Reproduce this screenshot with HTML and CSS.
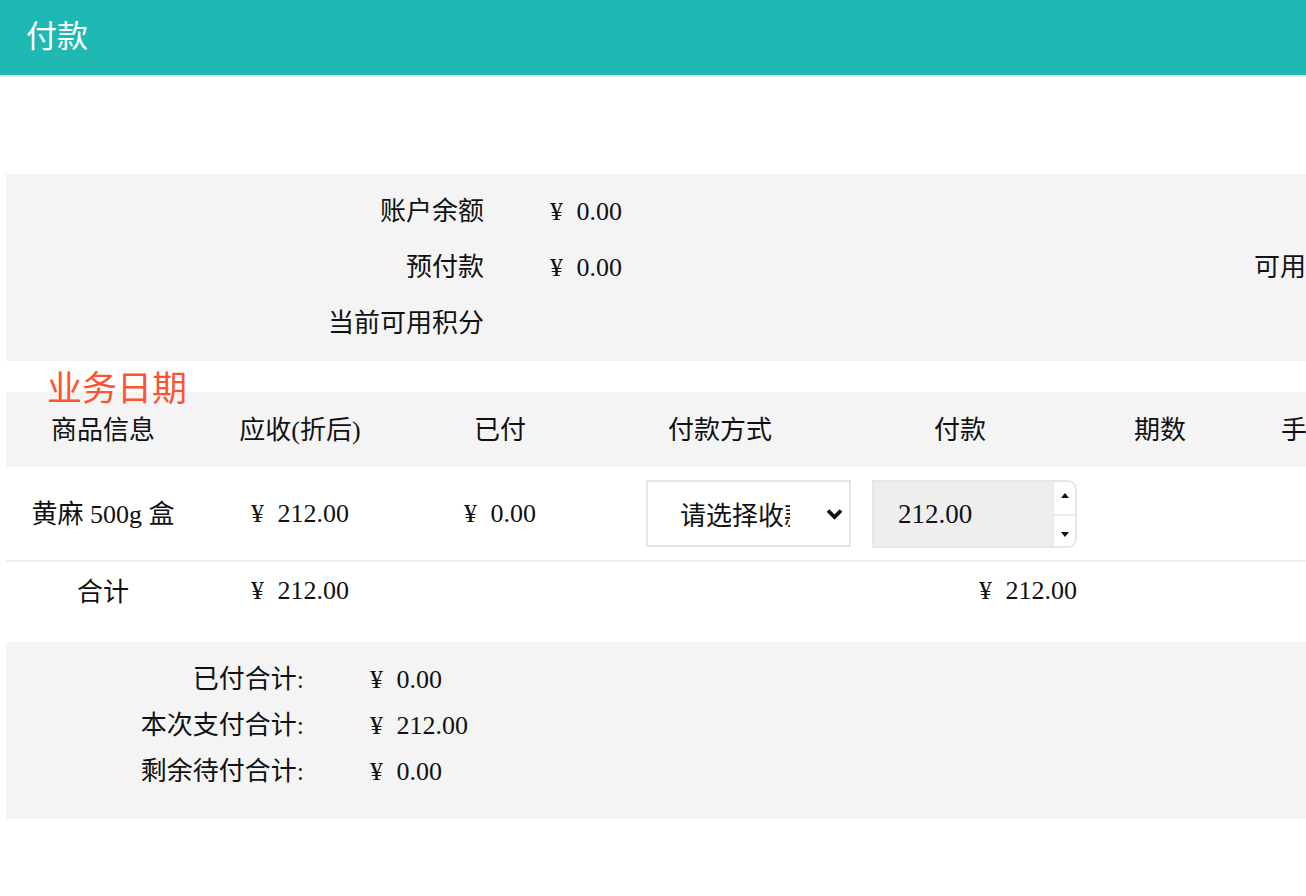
FILE: index.html
```html
<!DOCTYPE html>
<html lang="zh-CN">
<head>
	<meta charset="UTF-8">
	<title>付款</title>
	<link rel="stylesheet" href="styles.css">
</head>
<body>

	<div class="topbar">
		<h1>付款</h1>
	</div>

	<div class="page">

		<div class="account">
			<div class="account-row">
				<span class="lbl">账户余额</span><span class="val"><span class="cur">¥</span> 0.00</span>
				<span class="lbl">冻结额</span><span class="val"><span class="cur">¥</span> 0.00</span>
			</div>
			<div class="account-row">
				<span class="lbl">预付款</span><span class="val"><span class="cur">¥</span> 0.00</span>
				<span class="lbl">可用预付款</span><span class="val"><span class="cur">¥</span> 0.00</span>
			</div>
			<div class="account-row">
				<span class="lbl">当前可用积分</span><span class="val"></span>
				<span class="lbl"></span><span class="val"></span>
			</div>
		</div>

		<div class="biz-date">业务日期</div>

		<table class="pay-table">
			<colgroup>
				<col class="c1"><col class="c2"><col class="c3"><col class="c4"><col class="c5"><col class="c6"><col class="c7">
			</colgroup>
			<thead>
				<tr>
					<th>商品信息</th>
					<th>应收(折后)</th>
					<th>已付</th>
					<th>付款方式</th>
					<th>付款</th>
					<th>期数</th>
					<th>手续费</th>
				</tr>
			</thead>
			<tbody>
				<tr class="item">
					<td>黄麻 500g 盒</td>
					<td><span class="cur">¥</span> 212.00</td>
					<td><span class="cur">¥</span> 0.00</td>
					<td class="left">
						<div class="select">
							<span class="select-text">请选择收款方式</span>
							<svg class="chevron" width="17" height="12" viewBox="0 0 17 12"><path d="M2 2.5 L8.5 9 L15 2.5" fill="none" stroke="#111" stroke-width="3.8"/></svg>
						</div>
					</td>
					<td class="left">
						<div class="num-input">
							<span class="num-value">212.00</span>
							<span class="spin">
								<span class="spin-up"><i class="tri-up"></i></span>
								<span class="spin-down"><i class="tri-down"></i></span>
							</span>
						</div>
					</td>
					<td></td>
					<td></td>
				</tr>
				<tr class="total">
					<td>合计</td>
					<td><span class="cur">¥</span> 212.00</td>
					<td></td>
					<td></td>
					<td class="right"><span class="cur">¥</span> 212.00</td>
					<td></td>
					<td></td>
				</tr>
			</tbody>
		</table>

		<div class="summary">
			<div class="summary-row"><span class="lbl">已付合计:</span><span class="val"><span class="cur">¥</span> 0.00</span></div>
			<div class="summary-row"><span class="lbl">本次支付合计:</span><span class="val"><span class="cur">¥</span> 212.00</span></div>
			<div class="summary-row"><span class="lbl">剩余待付合计:</span><span class="val"><span class="cur">¥</span> 0.00</span></div>
		</div>

	</div>

</body>
</html>
```

FILE: styles.css
```css
html, body {
	margin: 0;
	padding: 0;
	overflow: hidden;
}

body {
	font-family: "Liberation Serif", "Noto Sans CJK SC", serif;
	font-size: 26px;
	color: #111;
	background: #fff;
}

.topbar {
	height: 75px;
	background: #20b8b3;
	border-bottom: 2px solid #e3e3e3;
	padding-left: 26px;
}

.topbar h1 {
	margin: 0;
	font-family: "Noto Sans CJK SC", sans-serif;
	font-size: 31px;
	font-weight: normal;
	line-height: 68px;
	color: #fff;
}

.page {
	padding-left: 6px;
	width: 1500px;
}

.cur {
	margin-right: 7px;
}

/* account info */
.account {
	margin-top: 97px;
	background: #f4f4f4;
	padding: 10px 0 9px;
}

.account-row {
	display: grid;
	grid-template-columns: 478px 422px 478px 422px;
	line-height: 56px;
	height: 56px;
}

.account-row .lbl {
	text-align: right;
}

.account-row .val {
	padding-left: 66px;
}

.biz-date {
	position: relative;
	z-index: 1;
	height: 31px;
	line-height: 50px;
	padding-left: 41px;
	font-family: "Noto Sans CJK SC", sans-serif;
	font-size: 35px;
	color: #ff5230;
}

/* table */
.pay-table {
	border-collapse: collapse;
	table-layout: fixed;
	width: 1394px;
}

.c1 { width: 194px; }
.c2 { width: 200px; }
.c3 { width: 200px; }
.c4 { width: 240px; }
.c5 { width: 240px; }
.c6 { width: 160px; }
.c7 { width: 160px; }

.pay-table th {
	height: 71px;
	padding: 0 0 4px;
	background: #f4f4f4;
	font-weight: normal;
	text-align: center;
	white-space: nowrap;
}

.pay-table td {
	padding: 0;
	text-align: center;
	white-space: nowrap;
}

.pay-table .item td {
	height: 93px;
	border-bottom: 2px solid #efefef;
}

.pay-table .item td:first-child {
	height: 89px;
	padding-bottom: 4px;
}

.pay-table .total td {
	height: 57px;
	padding-bottom: 2px;
}

.pay-table .total td:first-child {
	height: 55px;
	padding-bottom: 4px;
}

.pay-table td.left {
	text-align: left;
}

.pay-table td.right {
	text-align: right;
	padding-right: 3px;
}

.select {
	display: flex;
	align-items: center;
	box-sizing: border-box;
	width: 205px;
	height: 67px;
	margin-left: 46px;
	padding-left: 32px;
	background: #fff;
	border: 2px solid #e6e6e6;
	font-family: "Noto Sans CJK SC", sans-serif;
}

.select-text {
	display: block;
	width: 110px;
	overflow: hidden;
	white-space: nowrap;
}

.chevron {
	margin-left: 36px;
}

.num-input {
	display: flex;
	box-sizing: border-box;
	width: 205px;
	height: 68px;
	margin-left: 32px;
	background: #eeeeee;
	border: 2px solid #e6e6e6;
	border-radius: 0 9px 9px 0;
	overflow: hidden;
}

.num-value {
	flex: 1;
	padding-left: 24px;
	line-height: 64px;
	font-size: 27px;
}

.spin {
	display: flex;
	flex-direction: column;
	width: 21px;
	background: #fff;
	border-left: 1px solid #e6e6e6;
}

.spin-up, .spin-down {
	flex: 1;
	display: flex;
	justify-content: center;
}

.spin-up {
	align-items: flex-start;
	padding-top: 11px;
	border-bottom: 2px solid #ececec;
}

.spin-down {
	align-items: flex-end;
	padding-bottom: 9px;
}

.tri-up, .tri-down {
	width: 0;
	height: 0;
	border-left: 4px solid transparent;
	border-right: 4px solid transparent;
}

.tri-up {
	border-bottom: 5px solid #111;
}

.tri-down {
	border-top: 5px solid #111;
}

/* totals */
.summary {
	margin-top: 21px;
	background: #f4f4f4;
	padding: 15px 0 24px;
}

.summary-row {
	display: grid;
	grid-template-columns: 298px 1fr;
	height: 46px;
	line-height: 46px;
}

.summary-row .lbl {
	text-align: right;
}

.summary-row .val {
	padding-left: 66px;
}
```
